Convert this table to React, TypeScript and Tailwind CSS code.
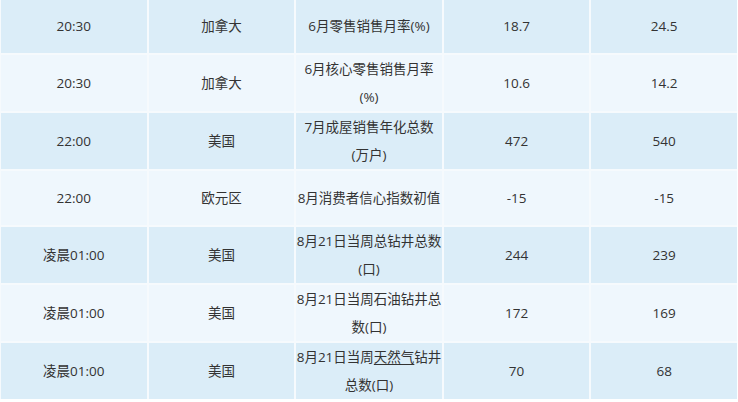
import type { ReactNode } from "react";

type Row = {
  time: string;
  region: string;
  item: ReactNode;
  prev: string;
  expect: string;
};

const rows: Row[] = [
  { time: "20:30", region: "加拿大", item: "6月零售销售月率(%)", prev: "18.7", expect: "24.5" },
  { time: "20:30", region: "加拿大", item: "6月核心零售销售月率(%)", prev: "10.6", expect: "14.2" },
  { time: "22:00", region: "美国", item: "7月成屋销售年化总数(万户)", prev: "472", expect: "540" },
  { time: "22:00", region: "欧元区", item: "8月消费者信心指数初值", prev: "-15", expect: "-15" },
  { time: "凌晨01:00", region: "美国", item: "8月21日当周总钻井总数(口)", prev: "244", expect: "239" },
  { time: "凌晨01:00", region: "美国", item: "8月21日当周石油钻井总数(口)", prev: "172", expect: "169" },
  {
    time: "凌晨01:00",
    region: "美国",
    item: (
      <>
        8月21日当周<span className="underline underline-offset-2">天然气</span>钻井总数(口)
      </>
    ),
    prev: "70",
    expect: "68",
  },
];

function Cell({ children }: { children: ReactNode }) {
  return (
    <div className="flex min-h-[54px] items-center justify-center text-center leading-[28px]">
      <span className="block w-full">{children}</span>
    </div>
  );
}

export default function App() {
  return (
    <div
      className="h-[402px] w-[738px] overflow-hidden bg-white text-[13.5px] text-[#333]"
      style={{ fontFamily: '"Open Sans", "Noto Sans CJK SC", sans-serif' }}
    >
      <div className="-mt-[1px] flex w-[737px] flex-col gap-[2px] bg-[#f6fafd] pl-[1px]">
        {rows.map((r, i) => (
          <div
            key={i}
            className={`grid grid-cols-5 gap-[2px] ${i % 2 === 0 ? "[&>div]:bg-[#dbedf8]" : "[&>div]:bg-[#eff7fd]"}`}
          >
            <Cell>{r.time}</Cell>
            <Cell>{r.region}</Cell>
            <Cell>{r.item}</Cell>
            <Cell>{r.prev}</Cell>
            <Cell>{r.expect}</Cell>
          </div>
        ))}
      </div>
    </div>
  );
}
